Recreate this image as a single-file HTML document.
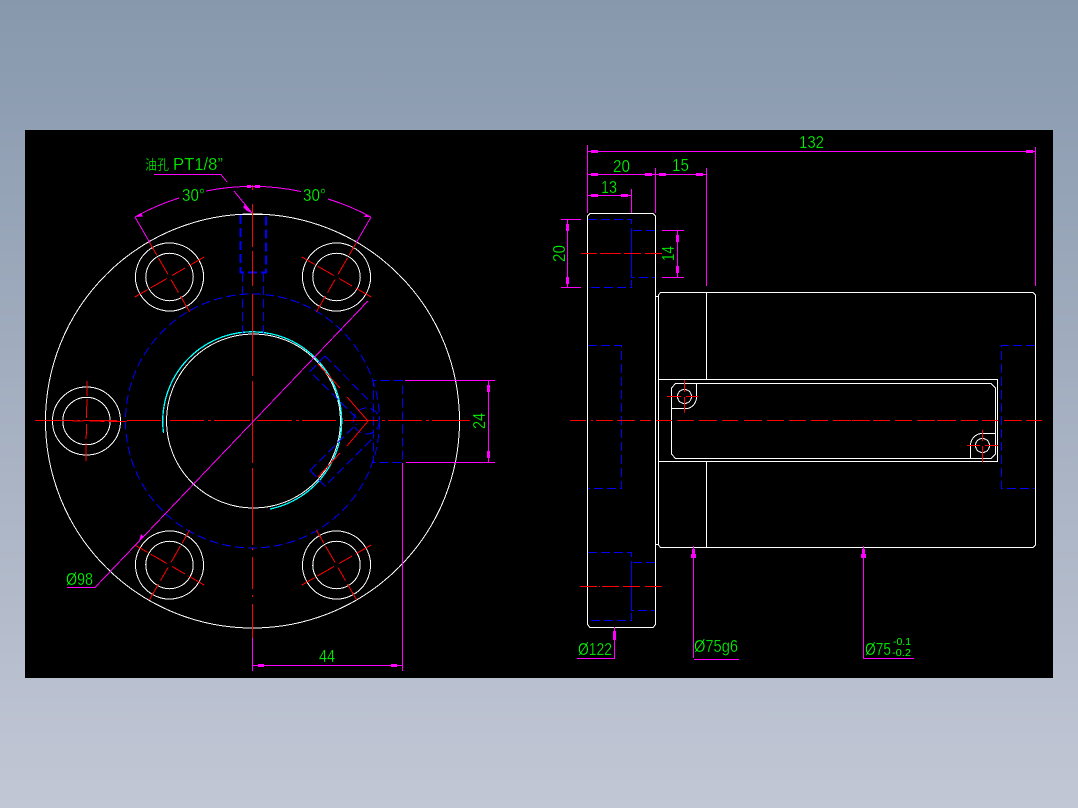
<!DOCTYPE html>
<html>
<head>
<meta charset="utf-8">
<style>
html,body{margin:0;padding:0;width:1078px;height:808px;overflow:hidden;background:linear-gradient(#8798ad,#c2c7d5);}
#c{position:absolute;left:25px;top:130px;width:1028px;height:548px;background:#000;}
svg{position:absolute;left:0;top:0;}
.w{stroke:#fff;fill:none;}
.r{stroke:#f00;fill:none;}
.b{stroke:#00f;fill:none;stroke-dasharray:9 4;}
.m{stroke:#f0f;fill:none;}
.a{fill:#f0f;stroke:none;}
text{fill:#0f0;font-family:"Liberation Sans","Noto Sans CJK SC",sans-serif;font-size:17.5px;stroke:#000;stroke-width:.3px;}
</style>
</head>
<body>
<div id="c"></div>
<svg width="1078" height="808" viewBox="0 0 1078 808">
<defs>
<g id="h" shape-rendering="crispEdges">
<circle r="34" class="w"/>
<circle r="23.7" class="w"/>
<path class="r" stroke-dasharray="15 3 19 6 15 4 18" d="M-40 0H40M0 -40V40"/>
</g>
</defs>
<g shape-rendering="crispEdges">
<!-- left view -->
<circle cx="252.5" cy="421" r="207" class="w"/>
<circle cx="252.5" cy="421" r="127" class="b"/>
<circle cx="253.5" cy="421" r="87" class="w"/>
<path d="M163.5 433A89.5 89.5 0 1 1 270 509" stroke="#0ff" stroke-width="1.3" fill="none"/>
<use href="#h" transform="translate(169.5 277) rotate(-30)"/>
<use href="#h" transform="translate(336.5 277) rotate(30)"/>
<use href="#h" transform="translate(86.5 421) rotate(1)"/>
<use href="#h" transform="translate(169.5 565) rotate(30)"/>
<use href="#h" transform="translate(336.5 565) rotate(-30)"/>
<!-- top oil hole -->
<path class="w" d="M235 214.5H270"/>
<path class="b" stroke-width="2" d="M240.5 215V272.5H266V215"/>
<path class="b" stroke-dasharray="12 5" d="M242.5 273V334M263.5 273V334"/>
<!-- key -->
<path class="b" d="M402.5 380.5H373.5V462.5H402.5V380.5"/>
<path class="b" d="M325 356L310 371.5L356.5 418M325 356L371.5 403"/>
<path class="b" d="M310 470.5L325 486L371.5 439.5M310 470.5L356.5 424"/>
<circle cx="366.5" cy="421" r="13" class="b" stroke-dasharray="6 3"/>
<path class="r" d="M347 397L368 421L347 446M318 364L340 388M318 477L340 453"/>
<!-- centre lines -->
<path class="r" d="M252.5 185V190M252.5 204V247M252.5 251V286M252.5 294V376M252.5 381V463M252.5 468V545M252.5 548V550M252.5 557V589M252.5 595V597M252.5 604V638"/>
<path class="r" d="M35 420.5H74M77 420.5H80M83 420.5H117M127 420.5H161M170 420.5H204M208 420.5H211M214 420.5H250M257 420.5H292M296 420.5H299M302 420.5H336M344 420.5H378M382 420.5H385M388 420.5H422M426 420.5H429M432 420.5H470"/>
<!-- magenta left -->
<path class="m" d="M135 217A235.5 235.5 0 0 1 179 198M206 191A235.5 235.5 0 0 1 301 191.5M328 199A235.5 235.5 0 0 1 371 217"/>
<path class="m" d="M135 217L150 243M371 217L356 243"/>
<path class="m" d="M154 174.5H221L227 182M234 191L252 213"/>
<path class="m" d="M67 587.5H95L368 301"/>
<path class="m" d="M405 380.5H495M406 462.5H495M488.5 381V462M402.5 463V671M252.5 638V671M253 665.5H402"/>
<path class="a" d="M247 185h4v3h-4zM255 185h5v3h-5z"/>
<!-- right view -->
<path class="w" d="M590 213.5H653L655.5 216V624.5L653 627.5H590L587.5 624.5V216Z"/>
<path class="w" d="M660.5 292.5H1033L1035.5 295V545L1033 547.5H660.5L658.5 545V295Z"/>
<path class="w" d="M656 296.5H658M656 544.5H658M706.5 293V379M706.5 462V547"/>
<path class="w" d="M658.5 379.5H997.5V461.5H658.5"/>
<path class="w" d="M675.5 383.5H991L995.5 388V454L991 458.5H675.5L671.5 454V388Z"/>
<circle cx="684.5" cy="396.5" r="7" class="w"/>
<path class="w" d="M696.5 383.5V397A12 12 0 0 1 688 408.5H672"/>
<circle cx="982.5" cy="445.5" r="7" class="w"/>
<path class="w" d="M995 433.5H981A12 12 0 0 0 970.5 445V458"/>
<path class="r" d="M667 396.5H681M686 396.5H698M684.5 380V392M684.5 397V412.5M967 445.5H980M985 445.5H998M982.5 430V441M982.5 446V462.5"/>
<!-- blue right view -->
<path class="b" d="M588 345.5H621.5V488.5H588"/>
<path class="b" d="M1035 345.5H1001.5V488.5H1035"/>
<path class="b" d="M588 219.5H631.5V287.5H588"/>
<path class="b" stroke-dasharray="12 5" d="M655 230.5H631.5V277.5H655"/>
<path class="b" d="M588 552.5H631.5V620.5H588"/>
<path class="b" stroke-dasharray="12 5" d="M655 562.5H631.5V610.5H655"/>
<!-- red right view -->
<path class="r" d="M570 420.5H586M591 420.5H593M596 420.5H613M617 420.5H635M640 420.5H651M656 420.5H672M677 420.5H694M699 420.5H717M722 420.5H738M744 420.5H762M767 420.5H784M789 420.5H806M811 420.5H828M833 420.5H851M852 420.5H870M873 420.5H890M895 420.5H912M917 420.5H935M937 420.5H956M961 420.5H978M982 420.5H998M1004 420.5H1022M1026 420.5H1042"/>
<path class="r" d="M581 253.5H597M600 253.5H602M602 253.5H621M624 253.5H641M645 253.5H662M580 586.5H597M599 586.5H600M602 586.5H619M623 586.5H640M645 586.5H662"/>
<!-- magenta right -->
<path class="m" d="M587.5 145V213M1035.5 147V286M587.5 151.5H1035M587.5 174.5H706M655.5 168V213M706.5 168V286M587.5 195.5H631M631.5 189V213"/>
<path class="m" d="M561 219.5H581M561 287.5H581M567.5 220V287M662 230.5H684M662 277.5H684M677.5 231V277"/>
<path class="m" d="M614.5 627V658.5H577M693.5 546V658M694 659.5H739M863.5 546V658.5H914"/>
<!-- arrow blocks -->
<path class="a" d="M591 150h7v3h-7zM1026 150h7v3h-7zM591 173h7v3h-7zM645 173h7v3h-7zM659 173h7v3h-7zM696 173h7v3h-7zM591 194h7v3h-7zM621 194h7v3h-7z"/>
<path class="a" d="M566 224h3v7h-3zM566 277h3v7h-3zM676 235h3v7h-3zM676 266h3v7h-3zM487 385h3v7h-3zM487 451h3v7h-3zM258 664h6v3h-6zM391 664h6v3h-6z"/>
<path class="a" d="M613 631h3v9h-3zM692 549h3v9h-3zM691 554h5v4h-5zM862 549h3v9h-3zM861 554h5v4h-5z"/>
</g>
<path class="a" d="M141 213L134.5 217L143 216.5ZM366 214L371 217L364 217ZM244 204L252 213L247 211ZM245 205l4 4l-2 2l-4-4ZM141 534l3 3l-5 4ZM363 306l3-3l1-2l-5 5Z"/>
<!-- text -->
<text x="145" y="170" style="font-size:14px" textLength="24" lengthAdjust="spacingAndGlyphs">油孔</text>
<text x="173" y="170" textLength="50" lengthAdjust="spacingAndGlyphs">PT1/8”</text>
<text x="182" y="201" textLength="23" lengthAdjust="spacingAndGlyphs">30°</text>
<text x="303" y="201" textLength="23" lengthAdjust="spacingAndGlyphs">30°</text>
<text x="319" y="662" textLength="16" lengthAdjust="spacingAndGlyphs">44</text>
<text x="66" y="585" textLength="27" lengthAdjust="spacingAndGlyphs">Ø98</text>
<text transform="translate(485 429) rotate(-90)" textLength="16" lengthAdjust="spacingAndGlyphs">24</text>
<text x="799" y="148" textLength="25" lengthAdjust="spacingAndGlyphs">132</text>
<text x="613" y="172" textLength="17" lengthAdjust="spacingAndGlyphs">20</text>
<text x="672" y="171" textLength="17" lengthAdjust="spacingAndGlyphs">15</text>
<text x="601" y="193" textLength="16" lengthAdjust="spacingAndGlyphs">13</text>
<text transform="translate(565 262) rotate(-90)" textLength="17" lengthAdjust="spacingAndGlyphs">20</text>
<text transform="translate(674 261) rotate(-90)" textLength="15" lengthAdjust="spacingAndGlyphs">14</text>
<text x="578" y="655" textLength="34" lengthAdjust="spacingAndGlyphs">Ø122</text>
<text x="694" y="652" textLength="44" lengthAdjust="spacingAndGlyphs">Ø75g6</text>
<text x="865" y="655" textLength="26" lengthAdjust="spacingAndGlyphs">Ø75</text>
<text x="893" y="645" textLength="18" lengthAdjust="spacingAndGlyphs" style="font-size:10px;stroke:none">-0.1</text>
<text x="892" y="656" textLength="19" lengthAdjust="spacingAndGlyphs" style="font-size:10px;stroke:none">-0.2</text>
</svg>
</body>
</html>
